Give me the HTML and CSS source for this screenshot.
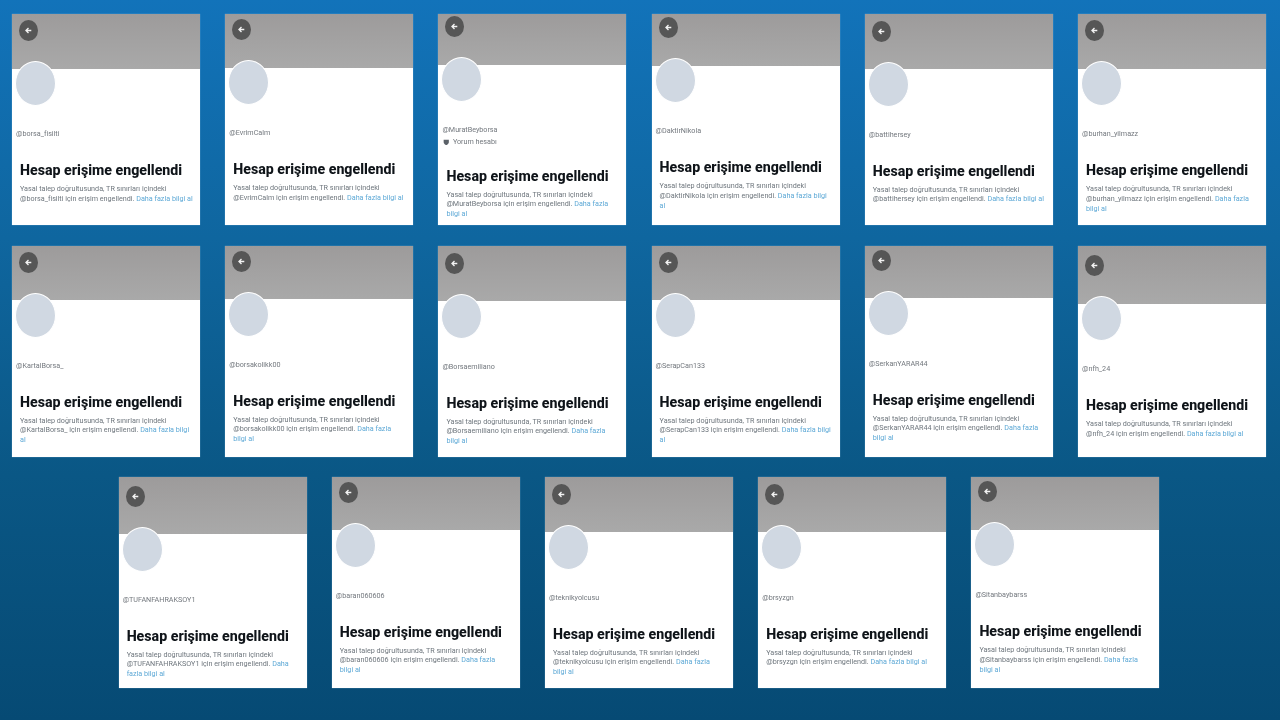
FILE: index.html
```html
<!DOCTYPE html>
<html lang="tr">
<head>
    <meta charset="UTF-8">
    <title>Hesap erişime engellendi</title>
    <link rel="stylesheet" href="styles.css">
</head>
<body>
    <svg class="icon-defs" width="0" height="0">
        <symbol id="arrow" viewBox="0 0 10 10">
            <path d="M9 5H1.6M5 1.4 1.4 5 5 8.6" fill="none" stroke="currentColor" stroke-width="1.9"/>
        </symbol>
    </svg>
    <main class="board">
        <section class="row">
            <article class="card shift-6">
                <div class="banner"><span class="back"><svg><use href="#arrow"/></svg></span></div>
                <div class="avatar"></div>
                <div class="handle">@borsa_fisilti</div>
                <h2 class="title">Hesap erişime engellendi</h2>
                <p class="notice">Yasal talep doğrultusunda, TR sınırları içindeki<br>@borsa_fisilti için erişim engellendi. <a class="more">Daha fazla bilgi al</a></p>
            </article>
            <article class="card shift-5">
                <div class="banner"><span class="back"><svg><use href="#arrow"/></svg></span></div>
                <div class="avatar"></div>
                <div class="handle">@EvrimCalm</div>
                <h2 class="title">Hesap erişime engellendi</h2>
                <p class="notice">Yasal talep doğrultusunda, TR sınırları içindeki<br>@EvrimCalm için erişim engellendi. <a class="more">Daha fazla bilgi al</a></p>
            </article>
            <article class="card shift-2">
                <div class="banner"><span class="back"><svg><use href="#arrow"/></svg></span></div>
                <div class="avatar"></div>
                <div class="handle">@MuratBeyborsa</div>
                <div class="label">
                    <svg class="shield" viewBox="0 0 10 10"><path d="M1 1h8v3.7C9 7 7 8.6 5 9.6 3 8.6 1 7 1 4.7z" fill="#5b6168"/></svg>
                    Yorum hesabı
                </div>
                <h2 class="title">Hesap erişime engellendi</h2>
                <p class="notice">Yasal talep doğrultusunda, TR sınırları içindeki<br>@MuratBeyborsa için erişim engellendi. <a class="more">Daha fazla<br>bilgi al</a></p>
            </article>
            <article class="card shift-3">
                <div class="banner"><span class="back"><svg><use href="#arrow"/></svg></span></div>
                <div class="avatar"></div>
                <div class="handle">@DaktirNikola</div>
                <h2 class="title">Hesap erişime engellendi</h2>
                <p class="notice">Yasal talep doğrultusunda, TR sınırları içindeki<br>@DaktirNikola için erişim engellendi. <a class="more">Daha fazla bilgi<br>al</a></p>
            </article>
            <article class="card shift-6-5">
                <div class="banner"><span class="back"><svg><use href="#arrow"/></svg></span></div>
                <div class="avatar"></div>
                <div class="handle">@battihersey</div>
                <h2 class="title">Hesap erişime engellendi</h2>
                <p class="notice">Yasal talep doğrultusunda, TR sınırları içindeki<br>@battihersey için erişim engellendi. <a class="more">Daha fazla bilgi al</a></p>
            </article>
            <article class="card shift-6">
                <div class="banner"><span class="back"><svg><use href="#arrow"/></svg></span></div>
                <div class="avatar"></div>
                <div class="handle">@burhan_yilmazz</div>
                <h2 class="title">Hesap erişime engellendi</h2>
                <p class="notice">Yasal talep doğrultusunda, TR sınırları içindeki<br>@burhan_yilmazz için erişim engellendi. <a class="more">Daha fazla<br>bilgi al</a></p>
            </article>
        </section>

        <section class="row">
            <article class="card shift-6">
                <div class="banner"><span class="back"><svg><use href="#arrow"/></svg></span></div>
                <div class="avatar"></div>
                <div class="handle">@KartalBorsa_</div>
                <h2 class="title">Hesap erişime engellendi</h2>
                <p class="notice">Yasal talep doğrultusunda, TR sınırları içindeki<br>@KartalBorsa_ için erişim engellendi. <a class="more">Daha fazla bilgi<br>al</a></p>
            </article>
            <article class="card shift-5">
                <div class="banner"><span class="back"><svg><use href="#arrow"/></svg></span></div>
                <div class="avatar"></div>
                <div class="handle">@borsakolikk00</div>
                <h2 class="title">Hesap erişime engellendi</h2>
                <p class="notice">Yasal talep doğrultusunda, TR sınırları içindeki<br>@borsakolikk00 için erişim engellendi. <a class="more">Daha fazla<br>bilgi al</a></p>
            </article>
            <article class="card shift-7">
                <div class="banner"><span class="back"><svg><use href="#arrow"/></svg></span></div>
                <div class="avatar"></div>
                <div class="handle">@Borsaemiliano</div>
                <h2 class="title">Hesap erişime engellendi</h2>
                <p class="notice">Yasal talep doğrultusunda, TR sınırları içindeki<br>@Borsaemiliano için erişim engellendi. <a class="more">Daha fazla<br>bilgi al</a></p>
            </article>
            <article class="card shift-6">
                <div class="banner"><span class="back"><svg><use href="#arrow"/></svg></span></div>
                <div class="avatar"></div>
                <div class="handle">@SerapCan133</div>
                <h2 class="title">Hesap erişime engellendi</h2>
                <p class="notice">Yasal talep doğrultusunda, TR sınırları içindeki<br>@SerapCan133 için erişim engellendi. <a class="more">Daha fazla bilgi<br>al</a></p>
            </article>
            <article class="card shift-4">
                <div class="banner"><span class="back"><svg><use href="#arrow"/></svg></span></div>
                <div class="avatar"></div>
                <div class="handle">@SerkanYARAR44</div>
                <h2 class="title">Hesap erişime engellendi</h2>
                <p class="notice">Yasal talep doğrultusunda, TR sınırları içindeki<br>@SerkanYARAR44 için erişim engellendi. <a class="more">Daha fazla<br>bilgi al</a></p>
            </article>
            <article class="card shift-9-5">
                <div class="banner"><span class="back"><svg><use href="#arrow"/></svg></span></div>
                <div class="avatar"></div>
                <div class="handle">@nfh_24</div>
                <h2 class="title">Hesap erişime engellendi</h2>
                <p class="notice">Yasal talep doğrultusunda, TR sınırları içindeki<br>@nfh_24 için erişim engellendi. <a class="more">Daha fazla bilgi al</a></p>
            </article>
        </section>

        <section class="row">
            <article class="card shift-8-5">
                <div class="banner"><span class="back"><svg><use href="#arrow"/></svg></span></div>
                <div class="avatar"></div>
                <div class="handle">@TUFANFAHRAKSOY1</div>
                <h2 class="title">Hesap erişime engellendi</h2>
                <p class="notice">Yasal talep doğrultusunda, TR sınırları içindeki<br>@TUFANFAHRAKSOY1 için erişim engellendi. <a class="more">Daha<br>fazla bilgi al</a></p>
            </article>
            <article class="card shift-4-5">
                <div class="banner"><span class="back"><svg><use href="#arrow"/></svg></span></div>
                <div class="avatar"></div>
                <div class="handle">@baran060606</div>
                <h2 class="title">Hesap erişime engellendi</h2>
                <p class="notice">Yasal talep doğrultusunda, TR sınırları içindeki<br>@baran060606 için erişim engellendi. <a class="more">Daha fazla<br>bilgi al</a></p>
            </article>
            <article class="card shift-6-5">
                <div class="banner"><span class="back"><svg><use href="#arrow"/></svg></span></div>
                <div class="avatar"></div>
                <div class="handle">@teknikyolcusu</div>
                <h2 class="title">Hesap erişime engellendi</h2>
                <p class="notice">Yasal talep doğrultusunda, TR sınırları içindeki<br>@teknikyolcusu için erişim engellendi. <a class="more">Daha fazla<br>bilgi al</a></p>
            </article>
            <article class="card shift-6-5">
                <div class="banner"><span class="back"><svg><use href="#arrow"/></svg></span></div>
                <div class="avatar"></div>
                <div class="handle">@brsyzgn</div>
                <h2 class="title">Hesap erişime engellendi</h2>
                <p class="notice">Yasal talep doğrultusunda, TR sınırları içindeki<br>@brsyzgn için erişim engellendi. <a class="more">Daha fazla bilgi al</a></p>
            </article>
            <article class="card shift-4">
                <div class="banner"><span class="back"><svg><use href="#arrow"/></svg></span></div>
                <div class="avatar"></div>
                <div class="handle">@Sitanbaybarss</div>
                <h2 class="title">Hesap erişime engellendi</h2>
                <p class="notice">Yasal talep doğrultusunda, TR sınırları içindeki<br>@Sitanbaybarss için erişim engellendi. <a class="more">Daha fazla<br>bilgi al</a></p>
            </article>
        </section>
    </main>
</body>
</html>
```

FILE: styles.css
```css
* {
    margin: 0;
    padding: 0;
    box-sizing: border-box;
}

body {
    font-family: Roboto, "Liberation Sans", sans-serif;
    background: linear-gradient(180deg, #1273ba 0%, #0f669f 33%, #0a5785 66%, #064a74 100%);
    height: 100vh;
    overflow: hidden;
}

.icon-defs {
    position: absolute;
}

.board {
    display: flex;
    flex-direction: column;
    gap: 20.5px;
    padding: 14px 2px 0 0;
}

.row {
    display: flex;
    justify-content: center;
    gap: 25.2px;
}

.card {
    width: 188px;
    height: 211px;
    flex: none;
    overflow: hidden;
    background: #fff;
    box-shadow: 0 0 1px rgba(170, 215, 240, 0.7);
    filter: blur(0.4px);
}

/* the cards were cropped by hand, so each sits a little higher or lower */
.shift-2 { --shift: 2px; }
.shift-3 { --shift: 3px; }
.shift-4 { --shift: 4px; }
.shift-4-5 { --shift: 4.5px; }
.shift-5 { --shift: 5px; }
.shift-6 { --shift: 6px; }
.shift-6-5 { --shift: 6.5px; }
.shift-7 { --shift: 7px; }
.shift-8-5 { --shift: 8.5px; }
.shift-9-5 { --shift: 9.5px; }

.banner {
    height: calc(48.7px + var(--shift));
    padding: var(--shift) 0 0 7px;
    background: linear-gradient(180deg, #9d9b9b, #a9a9a9);
}

.back {
    display: flex;
    align-items: center;
    justify-content: center;
    width: 19px;
    height: 21px;
    border-radius: 50%;
    background: #565656;
    color: #f2f2f2;
}

.back svg {
    width: 7px;
    height: 7px;
}

.avatar {
    width: 41px;
    height: 45px;
    margin: -7.5px 0 0 3px;
    border: 1.5px solid #fff;
    border-radius: 50%;
    background: #d0d8e2;
}

.handle {
    margin: 23px 0 0 4px;
    font-size: 7.2px;
    line-height: 10px;
    color: #73787e;
}

.label {
    display: flex;
    align-items: center;
    gap: 3px;
    margin: 2px 0 -2.5px 5px;
    font-size: 7.2px;
    line-height: 10px;
    color: #73787e;
}

.shield {
    width: 6.5px;
    height: 6.5px;
}

.title {
    margin: 21px 0 0 8px;
    font-size: 14.2px;
    line-height: 20px;
    font-weight: 800;
    white-space: nowrap;
    color: #0f1419;
}

.notice {
    margin: 4px 0 0 8px;
    font-size: 7.2px;
    line-height: 9.7px;
    white-space: nowrap;
    color: #6e767d;
}

.more {
    color: #5ea9d6;
}
```
